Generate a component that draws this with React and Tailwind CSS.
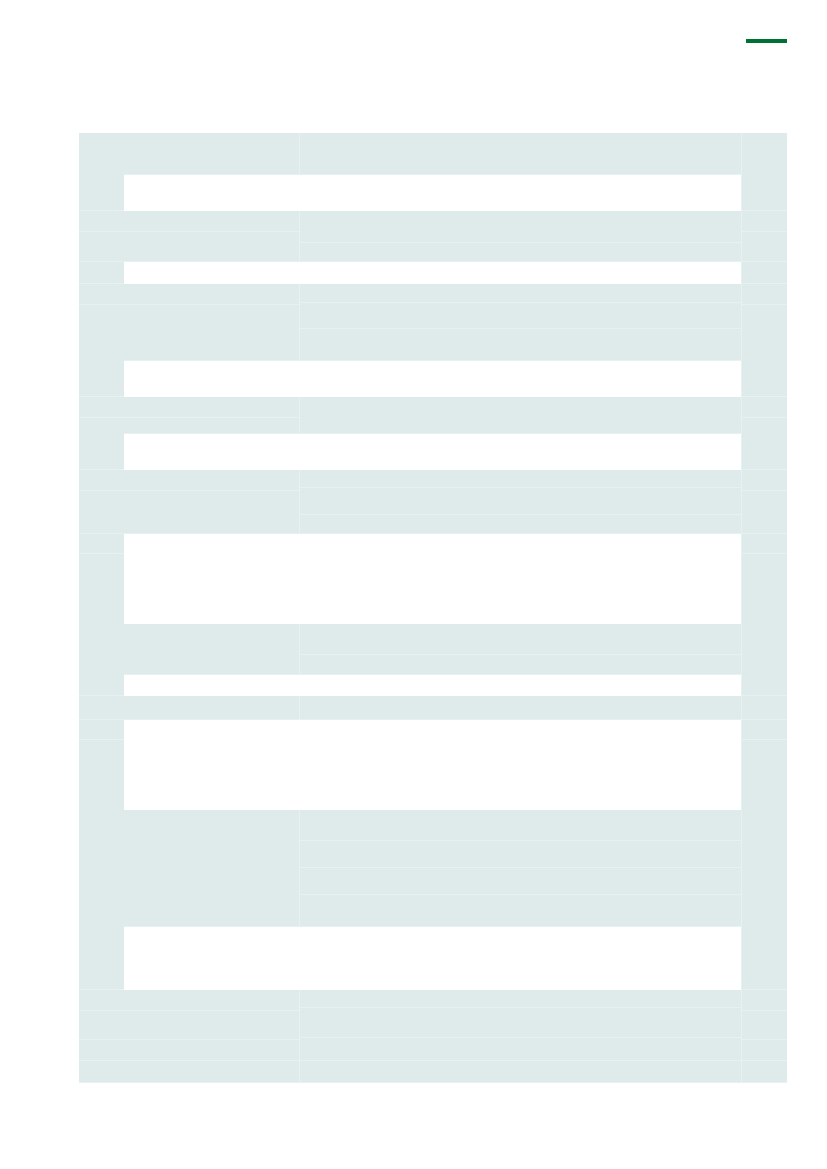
const side = [78, 21, 30, 22, 21, 92, 21, 52, 21, 43, 20, 142, 24, 20, 250, 21, 29, 21, 22];

// middle block: white rows are plain numbers, teal rows list col2 / col3 cell heights
const middle = [
  { h: 42, a: [42], b: [42] },
  36,
  { h: 51, a: [21, 30], b: [32, 19] },
  22,
  { h: 77, a: [21, 56], b: [19, 26, 32] },
  36,
  { h: 37, a: [21, 16], b: [37] },
  36,
  { h: 64, a: [21, 43], b: [18, 27, 19] },
  90,
  { h: 51, a: [51], b: [31, 20] },
  21,
  { h: 24, a: [24], b: [24] },
  90,
  { h: 117, a: [117], b: [31, 27, 27, 32] },
  63,
  { h: 93, a: [21, 29, 21, 22], b: [18, 30, 23, 22] },
];

function Cell({ h }) {
  return <div className="bg-[#dfebeb] border-b border-[#e8f1f1]" style={{ height: h }} />;
}

function SideCol() {
  return (
    <div className="flex flex-col w-[45px] shrink-0">
      {side.map((h, i) => (
        <Cell key={i} h={h} />
      ))}
    </div>
  );
}

export default function App() {
  return (
    <div className="w-[827px] min-h-[1169px] bg-white pt-[39px]">
      <div className="flex justify-end pr-[40px]">
        <div className="w-[41px] h-[4px] bg-[#007033]" />
      </div>

      <div className="ml-[79px] mt-[90px] w-[708px] flex">
        <SideCol />
        <div className="flex flex-col w-[617px]">
          {middle.map((row, i) =>
            typeof row === "number" ? (
              <div key={i} className="bg-white" style={{ height: row }} />
            ) : (
              <div key={i} className="flex" style={{ height: row.h }}>
                <div className="flex flex-col w-[176px] border-r border-[#e8f1f1]">
                  {row.a.map((h, j) => (
                    <Cell key={j} h={h} />
                  ))}
                </div>
                <div className="flex flex-col flex-1">
                  {row.b.map((h, j) => (
                    <Cell key={j} h={h} />
                  ))}
                </div>
              </div>
            )
          )}
        </div>
        <div className="border-l border-[#e8f1f1]">
          <SideCol />
        </div>
      </div>
    </div>
  );
}
